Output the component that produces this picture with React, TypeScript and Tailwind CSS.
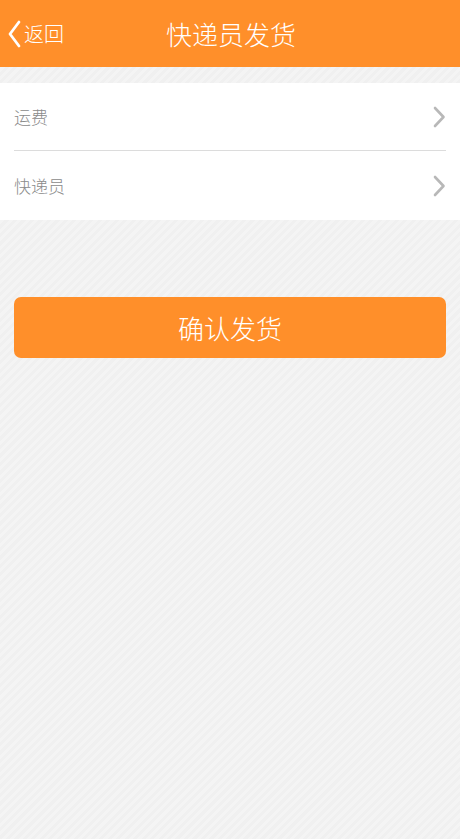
import React from "react";

function Chevron() {
  return (
    <svg width="14" height="22" viewBox="0 0 14 22" fill="none">
      <path d="M3 2 L11.5 11 L3 20" stroke="#b8b8b8" strokeWidth="2.6" strokeLinecap="round" strokeLinejoin="round" />
    </svg>
  );
}

export default function App() {
  const font = { fontFamily: '"Noto Sans CJK SC", "Liberation Sans", sans-serif' };
  return (
    <div
      className="w-[460px] h-[839px] flex flex-col bg-[#f2f2f2] bg-[repeating-linear-gradient(135deg,#f4f4f4_0px,#f4f4f4_3px,#f0f0f0_3px,#f0f0f0_6px)]"
      style={font}
    >
      <div className="h-[67px] bg-[#ff8f2a] flex items-center relative shrink-0">
        <div className="absolute left-[7px] top-0 h-full flex items-center">
          <svg width="15" height="30" viewBox="0 0 15 30" fill="none">
            <path d="M12 3 L3 15 L12 27" stroke="white" strokeWidth="2.8" strokeLinecap="round" strokeLinejoin="round" />
          </svg>
          <span className="text-white text-[20px] font-light ml-[2px] leading-none">返回</span>
        </div>
        <div className="flex-1 text-center text-white text-[26px] font-light leading-none pl-[2px]">快递员发货</div>
      </div>
      <div className="h-[16px]" />
      <div className="bg-white">
        <div className="h-[68px] mx-[14px] flex items-center justify-between border-b border-[#dcdcdc]">
          <span className="text-[17px] text-[#8a8a8a] font-light">运费</span>
          <Chevron />
        </div>
        <div className="h-[69px] mx-[14px] flex items-center justify-between">
          <span className="text-[17px] text-[#8a8a8a] font-light">快递员</span>
          <Chevron />
        </div>
      </div>
      <div className="px-[14px] pt-[77px]">
        <button className="w-full h-[61px] rounded-[7px] bg-[#ff8f2a] text-white text-[26px] font-light flex items-center justify-center">
          确认发货
        </button>
      </div>
    </div>
  );
}
